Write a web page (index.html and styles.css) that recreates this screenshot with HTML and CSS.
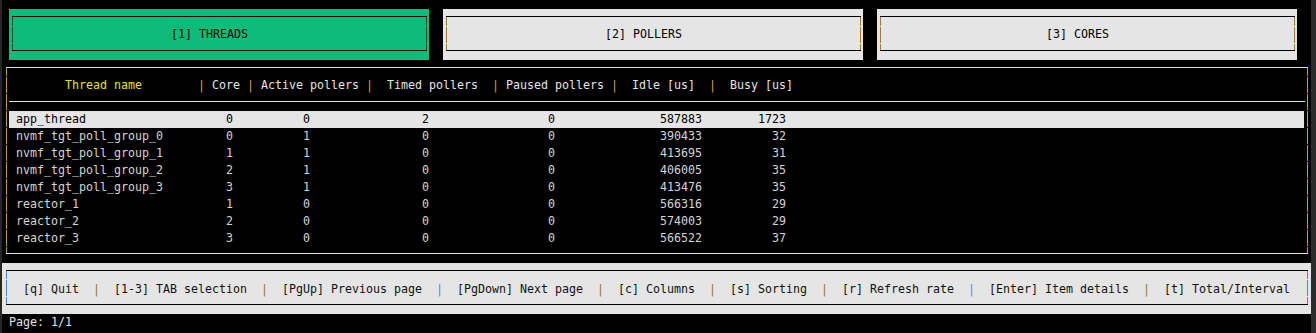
FILE: index.html
```html
<!DOCTYPE html>
<html lang="en">
  <head>
    <meta charset="UTF-8" />
    <title>spdk_top</title>
    <link rel="stylesheet" href="styles.css">
  </head>
  <body>
    <div class="screen">
      <div class="tabs">
        <div class="tab tab-active"><div class="tab-frame">[1] THREADS</div></div>
        <div class="tab"><div class="tab-frame">[2] POLLERS</div></div>
        <div class="tab"><div class="tab-frame">[3] CORES</div></div>
      </div>

      <div class="panel">
        <div class="row head">
          <span class="name-head">Thread name</span>
          <span><span class="sep">|</span> Core</span>
          <span><span class="sep">|</span> Active pollers</span>
          <span><span class="sep">|</span>  Timed pollers</span>
          <span><span class="sep">|</span> Paused pollers</span>
          <span><span class="sep">|</span>  Idle [us]</span>
          <span><span class="sep">|</span>  Busy [us]</span>
        </div>
        <div class="rule"></div>

        <div class="row selected">
          <span class="name">app_thread</span><span class="core">0</span><span class="mid">0</span><span class="mid">2</span><span class="mid">0</span><span class="num">587883</span><span class="num">1723</span>
        </div>
        <div class="row">
          <span class="name">nvmf_tgt_poll_group_0</span><span class="core">0</span><span class="mid">1</span><span class="mid">0</span><span class="mid">0</span><span class="num">390433</span><span class="num">32</span>
        </div>
        <div class="row">
          <span class="name">nvmf_tgt_poll_group_1</span><span class="core">1</span><span class="mid">1</span><span class="mid">0</span><span class="mid">0</span><span class="num">413695</span><span class="num">31</span>
        </div>
        <div class="row">
          <span class="name">nvmf_tgt_poll_group_2</span><span class="core">2</span><span class="mid">1</span><span class="mid">0</span><span class="mid">0</span><span class="num">406005</span><span class="num">35</span>
        </div>
        <div class="row">
          <span class="name">nvmf_tgt_poll_group_3</span><span class="core">3</span><span class="mid">1</span><span class="mid">0</span><span class="mid">0</span><span class="num">413476</span><span class="num">35</span>
        </div>
        <div class="row">
          <span class="name">reactor_1</span><span class="core">1</span><span class="mid">0</span><span class="mid">0</span><span class="mid">0</span><span class="num">566316</span><span class="num">29</span>
        </div>
        <div class="row">
          <span class="name">reactor_2</span><span class="core">2</span><span class="mid">0</span><span class="mid">0</span><span class="mid">0</span><span class="num">574003</span><span class="num">29</span>
        </div>
        <div class="row">
          <span class="name">reactor_3</span><span class="core">3</span><span class="mid">0</span><span class="mid">0</span><span class="mid">0</span><span class="num">566522</span><span class="num">37</span>
        </div>
      </div>

      <div class="footer">
        <div class="footer-frame">
          <span>[q] Quit</span>
          <span class="key-sep">|</span>
          <span>[1-3] TAB selection</span>
          <span class="key-sep">|</span>
          <span>[PgUp] Previous page</span>
          <span class="key-sep blue">|</span>
          <span>[PgDown] Next page</span>
          <span class="key-sep">|</span>
          <span>[c] Columns</span>
          <span class="key-sep">|</span>
          <span>[s] Sorting</span>
          <span class="key-sep">|</span>
          <span>[r] Refresh rate</span>
          <span class="key-sep blue">|</span>
          <span>[Enter] Item details</span>
          <span class="key-sep">|</span>
          <span>[t] Total/Interval</span>
        </div>
      </div>

      <div class="status">Page: 1/1</div>
    </div>
    <div class="scrollbar"></div>
  </body>
</html>
```

FILE: styles.css
```css
body {
  margin: 0;
  padding: 0;
  display: flex;
  min-height: 333px;
  background-color: #000;
  font-family: "DejaVu Sans Mono", monospace;
  font-size: 11.63px;
  line-height: 17px;
  color: #d4d4d4;
}

.screen {
  width: 1309px;
  flex: 0 0 1309px;
  border-left: 2px solid #262626;
  padding-top: 9px;
}

.scrollbar {
  flex: 1;
  background-color: #2b2b2b;
}

/* tabs */
.tabs {
  display: flex;
  gap: 14px;
  padding-left: 7px;
}

.tab {
  --side: #a8782e;
  width: 420px;
  height: 51px;
  box-sizing: border-box;
  padding: 7px 2px 9px 3px;
  background-color: #e5e5e5;
  color: #000;
}

.tab-active {
  --side: #1c4d2c;
  background-color: #0dbc79;
}

.tab-frame {
  height: 100%;
  box-sizing: border-box;
  display: flex;
  align-items: center;
  justify-content: center;
  padding: 2px 20px 0 0;
  white-space: pre;
  border-top: 1px solid #000;
  border-bottom: 1px solid #000;
  background:
    repeating-linear-gradient(var(--side) 0 9px, transparent 9px 10px, var(--side) 10px 17px) left top / 1px 100% no-repeat,
    repeating-linear-gradient(var(--side) 0 9px, transparent 9px 10px, var(--side) 10px 17px) right top / 1px 100% no-repeat;
}

/* thread table */
.panel {
  --edge: #c99a3a;
  width: 1302px;
  box-sizing: border-box;
  margin: 7px 0 0 4px;
  padding: 9px 4px 6px 3px;
  border-top: 1px solid #dcdcdc;
  border-bottom: 1px solid #dcdcdc;
  background:
    repeating-linear-gradient(var(--edge) 0 8px, transparent 8px 9px, var(--edge) 9px 17px) left top / 1px 100% no-repeat,
    repeating-linear-gradient(var(--edge) 0 8px, transparent 8px 9px, var(--edge) 9px 17px) right top / 1px 100% no-repeat,
    #000;
}

.row {
  display: grid;
  grid-template-columns: 189px 49px 119px 126px 119px 98px 84px 1fr;
  height: 17px;
  white-space: pre;
}

.head {
  color: #e5e5e5;
}

.name-head {
  color: #e5e510;
  text-align: center;
}

.sep {
  color: #d4a23c;
}

.rule {
  height: 1px;
  margin: 7px -1px 9px 0;
  background-color: #e0e0e0;
}

.selected {
  background-color: #e5e5e5;
  color: #000;
}

.name {
  padding-left: 7px;
}

.core {
  padding-left: 28px;
}

.mid {
  padding-left: 56px;
}

.num {
  text-align: right;
  padding-right: 7px;
}

/* key help */
.footer {
  height: 51px;
  box-sizing: border-box;
  margin-top: 9px;
  padding: 7px 3px 9px 4px;
  background-color: #e5e5e5;
  color: #111;
}

.footer-frame {
  height: 100%;
  box-sizing: border-box;
  display: flex;
  align-items: center;
  gap: 14px;
  padding: 4px 0 0 17px;
  white-space: pre;
  border-top: 1px solid #000;
  border-bottom: 1px solid #000;
  background:
    repeating-linear-gradient(#4a8ad0 0 8px, transparent 8px 9px, #4a8ad0 9px 17px) left top / 1px 100% no-repeat,
    repeating-linear-gradient(#a8782e 0 8px, transparent 8px 9px, #a8782e 9px 17px) right top / 1px 100% no-repeat;
}

.key-sep {
  color: #a8701e;
}

.key-sep.blue {
  color: #4a8ed8;
}

.status {
  height: 17px;
  padding-left: 7px;
  color: #e5e5e5;
}
```
